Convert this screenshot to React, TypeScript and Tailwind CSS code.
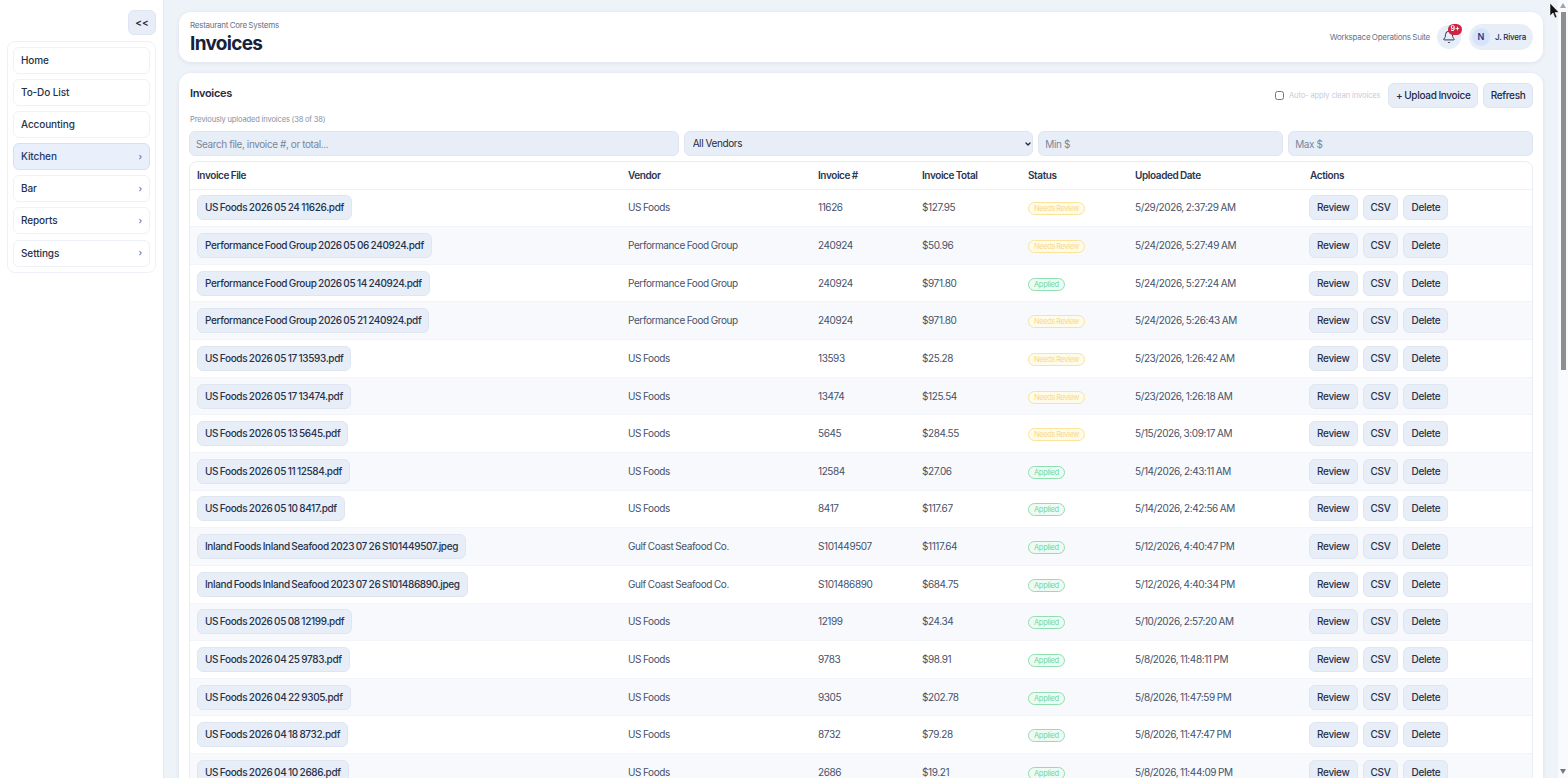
import { Bell, ChevronDown } from "lucide-react";

const navItems = [
  { label: "Home" },
  { label: "To-Do List" },
  { label: "Accounting" },
  { label: "Kitchen", arrow: true, active: true },
  { label: "Bar", arrow: true },
  { label: "Reports", arrow: true },
  { label: "Settings", arrow: true },
];

const topRows = [
  ["US Foods 2026 05 24 11626.pdf", "US Foods", "11626", "$127.95", "Needs Review", "5/29/2026, 2:37:29 AM"],
  ["Performance Food Group 2026 05 06 240924.pdf", "Performance Food Group", "240924", "$50.96", "Needs Review", "5/24/2026, 5:27:49 AM"],
  ["Performance Food Group 2026 05 14 240924.pdf", "Performance Food Group", "240924", "$971.80", "Applied", "5/24/2026, 5:27:24 AM"],
  ["Performance Food Group 2026 05 21 240924.pdf", "Performance Food Group", "240924", "$971.80", "Needs Review", "5/24/2026, 5:26:43 AM"],
  ["US Foods 2026 05 17 13593.pdf", "US Foods", "13593", "$25.28", "Needs Review", "5/23/2026, 1:26:42 AM"],
  ["US Foods 2026 05 17 13474.pdf", "US Foods", "13474", "$125.54", "Needs Review", "5/23/2026, 1:26:18 AM"],
  ["US Foods 2026 05 13 5645.pdf", "US Foods", "5645", "$284.55", "Needs Review", "5/15/2026, 3:09:17 AM"],
  ["US Foods 2026 05 11 12584.pdf", "US Foods", "12584", "$27.06", "Applied", "5/14/2026, 2:43:11 AM"],
  ["US Foods 2026 05 10 8417.pdf", "US Foods", "8417", "$117.67", "Applied", "5/14/2026, 2:42:56 AM"],
  ["Inland Foods Inland Seafood 2023 07 26 S101449507.jpeg", "Gulf Coast Seafood Co.", "S101449507", "$1117.64", "Applied", "5/12/2026, 4:40:47 PM"],
  ["Inland Foods Inland Seafood 2023 07 26 S101486890.jpeg", "Gulf Coast Seafood Co.", "S101486890", "$684.75", "Applied", "5/12/2026, 4:40:34 PM"],
  ["US Foods 2026 05 08 12199.pdf", "US Foods", "12199", "$24.34", "Applied", "5/10/2026, 2:57:20 AM"],
  ["US Foods 2026 04 25 9783.pdf", "US Foods", "9783", "$98.91", "Applied", "5/8/2026, 11:48:11 PM"],
  ["US Foods 2026 04 22 9305.pdf", "US Foods", "9305", "$202.78", "Applied", "5/8/2026, 11:47:59 PM"],
  ["US Foods 2026 04 18 8732.pdf", "US Foods", "8732", "$79.28", "Applied", "5/8/2026, 11:47:47 PM"],
  ["US Foods 2026 04 10 2686.pdf", "US Foods", "2686", "$19.21", "Applied", "5/8/2026, 11:44:09 PM"],
];

// the rest of the 38 rows sit below the fold, they only give the page its scroll height
const rows = [...topRows, ...topRows, ...topRows.slice(0, 6)];

const StatusPill = ({ status }: { status: string }) =>
  status === "Applied" ? (
    <span className="inline-block rounded-full border border-[#8fdfb0] bg-[#eefbf3] px-[5px] py-px text-[7.5px] leading-[9px] tracking-[-0.3px] text-[#6fd79b]">
      Applied
    </span>
  ) : (
    <span className="inline-block rounded-full border border-[#fbe39a] bg-[#fffbeb] px-[5px] py-px text-[7.5px] leading-[9px] tracking-[-0.4px] text-[#f6d98a]">
      Needs Review
    </span>
  );

const ActionButton = ({ label }: { label: string }) => (
  <button className="h-[25px] rounded-md border border-[#dfe6f2] bg-[#e8eef8] px-[7px] text-[10px] font-medium tracking-[-0.3px] text-[#273249]">
    {label}
  </button>
);

export default function App() {
  return (
    <div className="flex h-screen overflow-y-scroll bg-[#eef2f9] font-['Inter','Liberation_Sans',sans-serif] text-[#1f2a44]">
      <aside className="sticky top-0 h-screen w-[164px] shrink-0 border-r border-[#e4e9f2] bg-white px-[7px] pt-[10px]">
        <div className="flex justify-end">
          <button className="h-[25px] w-[28px] rounded-md border border-[#dfe6f2] bg-[#e8eef8] text-[10px] font-semibold">
            {"<<"}
          </button>
        </div>
        <nav className="mt-[6px] flex flex-col gap-[5.1px] rounded-lg border border-[#eef1f7] p-[5px]">
          {navItems.map((item) => (
            <div
              key={item.label}
              className={`flex h-[27px] items-center justify-between rounded-md border px-[7px] text-[10px] font-medium tracking-[-0.1px] ${
                item.active
                  ? "border-[#d5e0f2] bg-[#e9f0fc] text-[#1e3a6e]"
                  : "border-[#eef1f7] bg-white text-[#273249]"
              }`}
            >
              <span>{item.label}</span>
              {item.arrow && <span className="text-[9px] text-[#64748b]">›</span>}
            </div>
          ))}
        </nav>
      </aside>

      <main className="min-w-0 flex-1 self-start pb-4 pl-[15px] pr-[25px] pt-[12px]">
        <header className="flex h-[50px] items-center justify-between rounded-xl bg-white px-[10px] shadow-[0_1px_4px_rgba(30,50,90,0.08)]">
          <div className="pl-px pt-[2px]">
            <div className="text-[8px] leading-[10px] tracking-[-0.25px] text-[#64748b] [word-spacing:-0.5px]">Restaurant Core Systems</div>
            <h1 className="mt-[2px] text-[19px] font-bold leading-[24px] tracking-[-0.7px] text-[#16213a]">Invoices</h1>
          </div>
          <div className="flex items-center">
            <span className="mr-[7px] text-[8px] tracking-[-0.25px] text-[#64748b] [word-spacing:-0.5px]">Workspace Operations Suite</span>
            <div className="relative mr-[8px] flex h-[24px] w-[24px] items-center justify-center rounded-full bg-[#e8eef8]">
              <Bell size={14} strokeWidth={1.6} color="#1f2a44" />
              <span className="absolute -right-[1px] -top-[1px] flex h-[11px] w-[14px] items-center justify-center rounded-full bg-[#d0233f] text-[7px] font-bold text-white">
                9+
              </span>
            </div>
            <div className="flex h-[26px] items-center rounded-full bg-[#e8eef8] pl-[3px] pr-[7px]">
              <span className="flex h-[18px] w-[18px] items-center justify-center rounded-full bg-[#d6e3fb] text-[9px] font-semibold text-[#1e3a8a]">
                N
              </span>
              <span className="ml-[5px] text-[8px] font-medium tracking-[-0.2px]">J. Rivera</span>
            </div>
          </div>
        </header>

        <section className="mt-[11px] rounded-xl bg-white p-[10px] shadow-[0_1px_4px_rgba(30,50,90,0.08)]">
          <div className="flex items-start justify-between">
            <h2 className="mt-[2px] pl-px text-[11px] font-semibold tracking-[-0.3px]">Invoices</h2>
            <div className="flex items-center gap-[5px]">
              <label className="mr-[3px] flex items-center gap-[5px] text-[7.5px] tracking-[-0.1px] text-[#c5ccd8]">
                <input type="checkbox" className="h-[9px] w-[9px]" />
                Auto- apply clean invoices
              </label>
              <button className="h-[25px] rounded-md border border-[#dfe6f2] bg-[#e8eef8] px-[6.5px] text-[10px] font-medium tracking-[-0.3px] [word-spacing:-0.5px]">
                + Upload Invoice
              </button>
              <button className="h-[25px] rounded-md border border-[#dfe6f2] bg-[#e8eef8] px-[6.5px] text-[10px] font-medium tracking-[-0.3px]">
                Refresh
              </button>
            </div>
          </div>

          <p className="mt-[7px] pl-px text-[7.5px] leading-[10px] tracking-[-0.1px] text-[#8491a5] [word-spacing:-0.3px]">Previously uploaded invoices (38 of 38)</p>

          <div className="mt-[6px] grid grid-cols-[490fr_350fr_245fr_245fr] gap-[5px]">
            <input
              placeholder="Search file, invoice #, or total..."
              className="h-[25px] rounded-md border border-[#dfe6f2] bg-[#e8eef8] px-[6px] text-[10px] tracking-[-0.4px] placeholder:text-[#7b8699]"
            />
            <div className="relative flex">
              <select className="h-[25px] w-full appearance-none rounded-md border border-[#dfe6f2] bg-[#e8eef8] px-[8px] text-[10px] tracking-[-0.4px]">
                <option>All Vendors</option>
              </select>
              <ChevronDown size={8} strokeWidth={4} color="#1f2a44" className="absolute right-[1px] top-[9px]" />
            </div>
            <input
              placeholder="Min $"
              className="h-[25px] rounded-md border border-[#dfe6f2] bg-[#e8eef8] px-[6px] text-[10px] tracking-[-0.4px] placeholder:text-[#7b8699]"
            />
            <input
              placeholder="Max $"
              className="h-[25px] rounded-md border border-[#dfe6f2] bg-[#e8eef8] px-[6px] text-[10px] tracking-[-0.4px] placeholder:text-[#7b8699]"
            />
          </div>

          <div className="mt-[5px] overflow-hidden rounded-lg border border-[#e9edf4]">
            <table className="w-full table-fixed border-collapse text-left text-[10px] tracking-[-0.4px] text-[#465268] [word-spacing:-0.5px]">
              <colgroup>
                <col className="w-[431px]" />
                <col className="w-[190px]" />
                <col className="w-[104px]" />
                <col className="w-[106px]" />
                <col className="w-[107px]" />
                <col className="w-[175px]" />
                <col />
              </colgroup>
              <thead>
                <tr className="h-[27px] border-b border-[#eef1f7] text-[#2b3650]">
                  {["Invoice File", "Vendor", "Invoice #", "Invoice Total", "Status", "Uploaded Date", "Actions"].map((h) => (
                    <th key={h} className="px-[7px] font-semibold">
                      {h}
                    </th>
                  ))}
                </tr>
              </thead>
              <tbody>
                {rows.map((row, i) => (
                  <tr key={i} className={`h-[37.65px] border-b border-[#f1f4f9] ${i % 2 === 1 ? "bg-[#f7f9fc]" : "bg-white"}`}>
                    <td className="px-[7px]">
                      <span className="inline-block rounded-md border border-[#dfe6f2] bg-[#e8eef8] px-[7px] py-[5px] text-[10px] font-medium leading-[13px] tracking-[-0.35px] text-[#273249] [word-spacing:-0.7px]">
                        {row[0]}
                      </span>
                    </td>
                    <td className="px-[7px]">{row[1]}</td>
                    <td className="px-[7px]">{row[2]}</td>
                    <td className="px-[7px]">{row[3]}</td>
                    <td className="px-[7px]">
                      <StatusPill status={row[4]} />
                    </td>
                    <td className="px-[7px]">{row[5]}</td>
                    <td className="px-[7px]">
                      <div className="-ml-px flex gap-[5px]">
                        <ActionButton label="Review" />
                        <ActionButton label="CSV" />
                        <ActionButton label="Delete" />
                      </div>
                    </td>
                  </tr>
                ))}
              </tbody>
            </table>
          </div>
        </section>
      </main>

      {/* the browser's scrollbar and the mouse pointer, drawn over the page */}
      <div className="fixed right-0 top-0 flex h-screen w-[10px] flex-col items-center bg-[#f9fafd]">
        <div className="mt-[3px] h-0 w-0 border-x-[3.5px] border-b-[5px] border-x-transparent border-b-[#a3a3a3]" />
        <div className="mt-[4px] h-[358px] w-[5px] bg-[#8e8e8e]" />
        <div className="mt-auto mb-[4px] h-0 w-0 border-x-[3.5px] border-t-[5px] border-x-transparent border-t-[#777]" />
      </div>
      <svg className="fixed left-[1549px] top-[3px]" width="12" height="16" viewBox="0 0 12 16">
        <path d="M1 0v13l3-3 2 5 2-1-2-4.500h4z" fill="#111" stroke="#fff" strokeWidth="0.6" />
      </svg>
    </div>
  );
}
